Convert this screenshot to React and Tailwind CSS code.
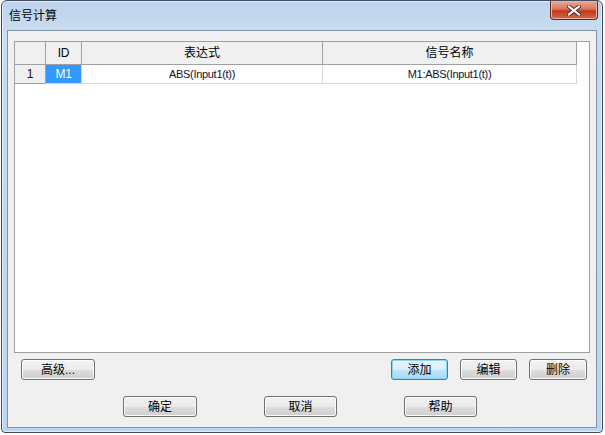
import React from 'react';

const font = { fontFamily: '"Liberation Sans", "Noto Sans CJK SC", sans-serif' };

function Btn({ label, w, active }) {
    return (
        <button
            className={`flex h-[21px] items-center justify-center rounded-[3px] border text-[12px] leading-none text-black ${w} ${
                active
                    ? 'border-[#3c7fb1] bg-[linear-gradient(to_bottom,#eaf6fd_0%,#d9f0fc_50%,#bee6fd_51%,#a7d9f5_100%)] shadow-[inset_0_0_0_1px_#8fd3f7]'
                    : 'border-[#707070] bg-[linear-gradient(to_bottom,#f2f2f2_0%,#ebebeb_50%,#dddddd_51%,#cfcfcf_100%)] shadow-[inset_0_0_0_1px_#fcfcfc]'
            }`}
        >
            {label}
        </button>
    );
}

export default function App() {
    return (
        <div className="h-[435px] w-[605px] bg-white" style={font}>
            <div className="ml-[1px] flex h-[433px] w-[602px] flex-col rounded-t-[6px] rounded-b-[4px] border border-[#404c5c] bg-[linear-gradient(to_bottom,#bcd3ec_0px,#c9dcf1_30px,#c3d8ef_200px,#bcd4ee_100%)] px-[5px] pb-[4px] shadow-[inset_0_0_0_1px_#e4eef9]">
                {/* title bar */}
                <div className="flex h-[29px] shrink-0 items-start justify-between">
                    <span className="mt-[8px] ml-[2px] text-[12px] leading-[14px] text-black">信号计算</span>
                    <div className="-mr-[1px] flex h-[19px] w-[48px] items-center justify-center rounded-b-[4px] border border-t-0 border-[#6b2419] bg-[linear-gradient(to_bottom,#e9a998_0%,#d9775f_45%,#c3391c_55%,#cf6a4f_100%)] shadow-[inset_0_0_0_1px_#eeb3a4]">
                        <svg width="14" height="11" viewBox="0 0 14 11">
                            <path d="M2 1.5 L12 9.5 M12 1.5 L2 9.5" stroke="#4d2a23" strokeWidth="4" strokeLinecap="square" />
                            <path d="M2 1.5 L12 9.5 M12 1.5 L2 9.5" stroke="#ffffff" strokeWidth="2.2" strokeLinecap="square" />
                        </svg>
                    </div>
                </div>

                {/* client area */}
                <div className="flex flex-1 flex-col border border-[#8393a6] bg-[#f0f0f0]">
                    <div className="mx-[6px] mt-[10px] h-[312px] border border-[#a0a0a0] bg-white">
                        <div className="flex h-[23px] text-[12px] text-black">
                            <div className="w-[31px] border-r border-b border-[#a0a0a0] bg-[#f0f0f0]" />
                            <div className="flex w-[36px] items-center justify-center border-r border-b border-[#a0a0a0] bg-[#f0f0f0] tracking-[-0.3px]">ID</div>
                            <div className="flex w-[241px] items-center justify-center border-r border-b border-[#a0a0a0] bg-[#f0f0f0]">表达式</div>
                            <div className="flex w-[254px] items-center justify-center border-r border-b border-[#a0a0a0] bg-[#f0f0f0]">信号名称</div>
                        </div>
                        <div className="flex h-[19px] text-[11px] tracking-[-0.3px] text-[#101030]">
                            <div className="flex w-[31px] items-center justify-center border-r border-b border-[#a0a0a0] bg-[#f0f0f0] text-[12px] text-[#300010]">1</div>
                            <div className="flex w-[36px] items-center justify-center border-r border-b border-[#d8d8d8] bg-[#3399ff] text-[12px] text-white">M1</div>
                            <div className="flex w-[241px] items-center justify-center border-r border-b border-[#d8d8d8]">ABS(Input1(t))</div>
                            <div className="flex w-[254px] items-center justify-center border-r border-b border-[#d8d8d8]">M1:ABS(Input1(t))</div>
                        </div>
                    </div>

                    <div className="mt-[6px] flex items-center pr-[9px] pl-[13px]">
                        <Btn label="高级..." w="w-[74px]" />
                        <div className="flex-1" />
                        <div className="flex gap-[12px]">
                            <Btn label="添加" w="w-[57px]" active />
                            <Btn label="编辑" w="w-[57px]" />
                            <Btn label="删除" w="w-[58px]" />
                        </div>
                    </div>

                    <div className="mt-[16px] flex items-center gap-[67px] pl-[115px]">
                        <Btn label="确定" w="w-[74px]" />
                        <Btn label="取消" w="w-[73px]" />
                        <Btn label="帮助" w="w-[73px]" />
                    </div>
                </div>
            </div>
        </div>
    );
}
